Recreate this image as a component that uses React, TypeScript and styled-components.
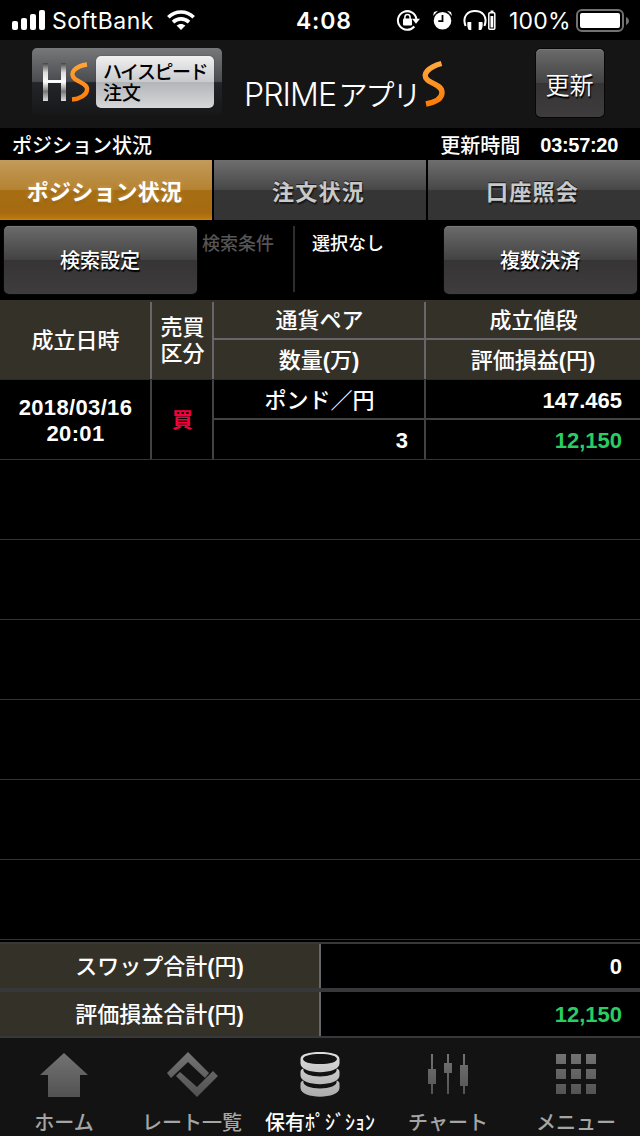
import React from "react";
import styled, { createGlobalStyle } from "styled-components";

const Global = createGlobalStyle`
  * { box-sizing: border-box; }
  body {
    margin: 0;
    background: #000;
    color: #fff;
    font-family: "Liberation Sans", "Noto Sans CJK JP", sans-serif;
    font-weight: 500;
  }
  svg { display: block; flex: none; }
`;

const Screen = styled.div`
  width: 640px;
  height: 1136px;
  display: flex;
  flex-direction: column;
  overflow: hidden;
  white-space: nowrap;
  background: #000;
`;

const StatusBar = styled.div`
  height: 40px;
  flex: none;
  display: flex;
  align-items: center;
  padding-left: 12px;
  font-family: Inter, sans-serif;
  font-size: 23px;
  font-weight: 400;
`;
const Carrier = styled.span`
  width: 102px;
  margin: 1px 13px 0 7px;
  letter-spacing: 0.5px;
`;
const Clock = styled.span`
  width: 100px;
  margin: 1px 0 0 101px;
  font-weight: 600;
  letter-spacing: 0.8px;
`;
const BatteryLevel = styled.span`
  width: 67px;
  margin: 1px 0 0 13px;
  letter-spacing: 0.2px;
`;

const Header = styled.header`
  height: 88px;
  flex: none;
  display: flex;
  align-items: flex-start;
  padding: 8px 36px 0 32px;
  background: #151515;
`;
const HighSpeedButton = styled.button`
  width: 190px;
  height: 68px;
  padding: 8px 8px 0 10px;
  display: flex;
  border: 0;
  border-radius: 5px;
  color: #000;
  background: linear-gradient(#77787a, #4b4c50 49%, #242529 51%, #17181a 96%, #151515);
`;
const HighSpeedLabel = styled.span`
  width: 118px;
  height: 52px;
  margin-left: 2px;
  padding: 4px 0 0 7px;
  border-radius: 5px;
  text-align: left;
  background: linear-gradient(#f0f0f1, #c8c9cb 50%, #b4b5b8 51%, #d6d7d9);
  box-shadow: 0 0 1px #222;
  font: 500 19px/21px "Noto Sans CJK JP", sans-serif;
`;
const TightLine = styled.span`
  display: block;
  height: 21px;
  letter-spacing: -1.5px;
`;
const Brand = styled.div`
  display: flex;
  align-items: flex-start;
  margin: 11px 0 0 22px;
  width: 203px;
  font: 300 32px/50px "Noto Sans CJK JP", sans-serif;
`;
const BrandLatin = styled.span`
  width: 96px;
  padding-top: 11px;
  font-family: Inter, sans-serif;
  font-size: 32px;
  letter-spacing: -0.9px;
`;
const BrandKana = styled.span`
  width: 82px;
  padding-top: 9px;
  font-size: 29px;
  font-weight: 350;
  letter-spacing: -2px;
  text-indent: -1px;
`;

const GlossButton = styled.button<{ $w: number; $light?: boolean }>`
  width: ${(p) => p.$w}px;
  height: 68px;
  padding: 0 1px 0 0;
  border: 0;
  border-radius: 5px;
  color: #fff;
  background: linear-gradient(#6c6b6c, #444344 49.5%, #363435 50.5%, #3e3c3d);
  box-shadow: 0 0 0 1px #070707, inset 0 1px 0 #7a7a7a;
  text-shadow: 1px 2px 1px #000;
  font: ${(p) => (p.$light ? "350 24px/67px" : "500 20px/68px")} "Noto Sans CJK JP", sans-serif;
`;
const Refresh = styled(GlossButton)`
  margin: 1px 0 0 auto;
`;

const TitleRow = styled.div`
  height: 32px;
  flex: none;
  display: flex;
  align-items: center;
  padding: 0 22px 0 12px;
  font-size: 20px;
`;
const UpdatedAt = styled.span`
  margin-left: auto;
  display: flex;
  align-items: center;
`;
const Digits = styled.span`
  font-weight: 700;
  letter-spacing: -0.3px;
  margin: 2px 0 0 20px;
`;

const Tabs = styled.nav`
  height: 60px;
  flex: none;
  display: grid;
  grid-template-columns: 212px 212px 212px;
  gap: 2px;
`;
const Tab = styled.button<{ $active?: boolean }>`
  padding: 0 3px 0 0;
  border: 0;
  color: ${(p) => (p.$active ? "#fff" : "#c9c9c9")};
  background: ${(p) =>
    p.$active
      ? "linear-gradient(#c29a5b, #b58332 49%, #a66e13 51%, #a66b10 88%, #b87610 96%, #cc820b)"
      : "linear-gradient(#6e6e6e, #484848 49%, #353535 51%, #343434)"};
  text-shadow: ${(p) => (p.$active ? "0 0 4px #dca95a, 0 2px 3px #754900" : "0 -1px 0 #222, 1px 2px 1px #181818")};
  letter-spacing: ${(p) => (p.$active ? "0.2px" : "1.3px")};
  font: 700 22px/58px "Noto Sans CJK JP", sans-serif;
`;

const SearchRow = styled.div`
  height: 80px;
  flex: none;
  display: flex;
  align-items: flex-start;
  padding: 6px 3px 0 4px;
`;
const Condition = styled.div`
  flex: 1;
  height: 66px;
  display: flex;
  font-size: 18px;
  line-height: 36px;
  padding-left: 5px;
`;
const ConditionName = styled.span`
  width: 93px;
  color: #555;
  border-right: 2px solid #2e2e30;
`;
const ConditionValue = styled.span`
  padding-left: 17px;
`;

const columns = "150px 60px 210px 214px";
const RecordGrid = styled.div<{ $head?: boolean }>`
  height: 80px;
  flex: none;
  display: grid;
  grid-template-columns: ${columns};
  column-gap: 2px;
  padding: ${(p) => (p.$head ? "2px 0 1px" : "0")};
  border-bottom: ${(p) => (p.$head ? "1px solid #2a2a2a" : "1px solid #333")};
  background: ${(p) => (p.$head ? "#343129" : "#000")};
  font-size: 22px;
`;
const Cell = styled.div<{ $head?: boolean; $first?: boolean }>`
  display: flex;
  align-items: center;
  justify-content: center;
  text-align: center;
  line-height: 26px;
  padding: ${(p) => (p.$head ? "1px 0 0 1px" : "3px 0 0 1px")};
  margin-left: ${(p) => (p.$first ? 0 : -2)}px;
  border-left: ${(p) => (p.$first ? "0" : `2px solid ${p.$head ? "#68666a" : "#424144"}`)};
`;
const Pair = styled(Cell)`
  flex-direction: column;
  align-items: stretch;
  justify-content: flex-start;
  padding: 0;
`;
const Upper = styled.div<{ $head?: boolean; $right?: boolean }>`
  height: ${(p) => (p.$head ? 38 : 40)}px;
  line-height: ${(p) => (p.$head ? 38 : 42)}px;
  border-bottom: 2px solid ${(p) => (p.$head ? "#68666a" : "#424144")};
  padding: ${(p) => (p.$right ? "0 18px 0 0" : "0 0 0 1px")};
  text-align: ${(p) => (p.$right ? "right" : "center")};
`;
const Lower = styled.div<{ $inset?: number; $gain?: boolean }>`
  height: 39px;
  line-height: 42px;
  padding-right: ${(p) => p.$inset ?? 0}px;
  text-align: ${(p) => (p.$inset ? "right" : "center")};
  color: ${(p) => (p.$gain ? "#2bcc63" : "#fff")};
`;
const Num = styled.b<{ $wide?: boolean }>`
  font-weight: 700;
  letter-spacing: ${(p) => (p.$wide ? 0.35 : 0)}px;
`;
const BuySide = styled.span`
  color: #f5003d;
  font-weight: 700;
  font-size: 21px;
  margin-top: -2px;
`;
const EmptyRow = styled.div`
  height: 80px;
  flex: none;
  border-bottom: 1px solid #333;
`;

const Totals = styled.div`
  height: 98px;
  flex: none;
  padding: 2px 0 0;
  border-bottom: 1px solid #4c4c4c;
  display: flex;
  flex-direction: column;
`;
const TotalRow = styled.div`
  height: 48px;
  display: grid;
  grid-template-columns: 319px 321px;
  border-top: 2px solid #38383a;
  border-bottom: 2px solid #38383a;
  font-size: 22px;
  line-height: 46px;
`;
const TotalName = styled.div`
  height: 44px;
  text-align: center;
  background: #343129;
`;
const TotalValue = styled.div<{ $gain?: boolean }>`
  height: 44px;
  border-left: 2px solid #68666a;
  padding-right: 18px;
  text-align: right;
  color: ${(p) => (p.$gain ? "#2bcc63" : "#fff")};
`;

const NavBar = styled.nav`
  height: 98px;
  flex: none;
  display: grid;
  grid-template-columns: repeat(5, 128px);
  background: #131313;
`;
const NavItem = styled.a<{ $active?: boolean }>`
  display: flex;
  flex-direction: column;
  align-items: center;
  padding-top: 10px;
  color: ${(p) => (p.$active ? "#fff" : "#a5a5a5")};
  font: 500 20px/32px "Noto Sans CJK JP", sans-serif;
`;
const NavLabel = styled.span`
  margin-top: 4px;
`;

const navGradient = (
  <defs>
    <linearGradient id="grey" x1="0" y1="0" x2="0" y2="54" gradientUnits="userSpaceOnUse">
      <stop offset="0.1" stopColor="#737373" />
      <stop offset="0.95" stopColor="#505050" />
    </linearGradient>
    <linearGradient id="silver" x1="0" y1="0" x2="0" y2="54" gradientUnits="userSpaceOnUse">
      <stop offset="0.1" stopColor="#dedede" />
      <stop offset="1" stopColor="#a4a4a4" />
    </linearGradient>
  </defs>
);

const HomeIcon = () => (
  <svg width="60" height="54" viewBox="0 0 60 54">
    {navGradient}
    <path fill="url(#grey)" d="M30 5 54 27H46V49H14V27H6Z" />
  </svg>
);
const RateIcon = () => (
  <svg width="60" height="54" viewBox="0 0 60 54">
    <path fill="url(#grey)" d="M26 4 47 25 43 30 26 14 9 30 5 25ZM35 49 14 28 18 24 35 39 51 23 56 28Z" />
  </svg>
);
const CoinsIcon = () => (
  <svg width="60" height="54" viewBox="0 0 60 54">
    <g fill="url(#silver)">
      <path d="M10.500 36C10.500 34 11.500 33 13.500 32.500C10 43 50 43 46.500 32.500C48.500 33 49.500 34 49.500 36V40C49.500 51.500 10.500 51.500 10.500 40Z" />
      <path d="M10.500 24C10.500 22 11.500 21 13.500 20.500C10 31 50 31 46.500 20.500C48.500 21 49.500 22 49.500 24V27.500C49.500 39 10.500 39 10.500 27.500Z" />
      <path fillRule="evenodd" d="M10.500 11C10.500 6 19 4 30 4S49.500 6 49.500 11V15.500C49.500 27 10.500 27 10.500 15.500ZM13 11C13 14 20 16 30 16S47 14 47 11 40 6 30 6 13 8 13 11Z" />
    </g>
  </svg>
);
const ChartIcon = () => (
  <svg width="60" height="54" viewBox="0 0 60 54">
    <path fill="url(#grey)" d="M13 6h2v15h3v15h-3v10h-2V36h-3V21h3ZM29 6h2v9h3v10h-3v21h-2V25h-3V15h3ZM45 6h2v11h3v21h-3v8h-2v-8h-3V17h3Z" />
  </svg>
);
const MenuIcon = () => (
  <svg width="60" height="54" viewBox="0 0 60 54">
    <path fill="url(#grey)" d="M10 6h10v10H10ZM25 6h10v10H25ZM40 6h10v10H40ZM10 21h10v10H10ZM25 21h10v10H25ZM40 21h10v10H40ZM10 36h10v10H10ZM25 36h10v10H25ZM40 36h10v10H40Z" />
  </svg>
);

const SignalIcon = () => (
  <svg width="33" height="20" viewBox="0 0 33 20" fill="#fff">
    <rect x="0" y="11" width="6" height="9" rx="2" />
    <rect x="9" y="8" width="6" height="12" rx="2" />
    <rect x="18" y="4" width="6" height="16" rx="2" />
    <rect x="27" y="0" width="6" height="20" rx="2" />
  </svg>
);
const WifiIcon = () => (
  <svg width="28" height="20" viewBox="0 0 28 20" fill="none" stroke="#fff" strokeWidth="3.600">
    <path d="M1.300 7.200C8.500.2 19.500.2 26.700 7.200" />
    <path d="M6 12.100c4.700-4.300 11.300-4.300 16 0" />
    <path d="M14 20 9.600 15.600c2.600-2.200 6.200-2.200 8.800 0Z" fill="#fff" stroke="none" />
  </svg>
);
const StatusIcons = () => (
  <svg width="100" height="24" viewBox="0 0 100 24" fill="none" stroke="#fff" strokeWidth="2">
    <path d="M18.300 18.500A9.300 9.300 0 1 1 20.400 11" />
    <path d="M16 10.800h8l-4 5Z" fill="#fff" stroke="none" />
    <rect x="7" y="10.500" width="9" height="7" rx="1" fill="#fff" stroke="none" />
    <path d="M8.900 11V9a2.600 2.600 0 0 1 5.200 0v2" strokeWidth="1.500" />
    <circle cx="46.500" cy="12.700" r="8.800" fill="#fff" stroke="none" />
    <path d="M37 8 38 4l4-1.300ZM56 8 55 4l-4-1.300Z" fill="#fff" stroke="none" />
    <path d="M46.500 7v6.200h-4.200" stroke="#000" strokeWidth="1.800" />
    <path d="M69.500 18C66 8 72 3 79 3S92 8 88.500 18" />
    <path d="M71.500 14h3.800v8h-2.500c-1.300-1.300-1.800-5-1.300-8ZM82.700 14h3.800c.5 3 0 6.700-1.300 8h-2.500Z" fill="#fff" stroke="none" />
    <rect x="92.800" y="4.800" width="6" height="16.500" rx="1" strokeWidth="1.500" />
    <path d="M94.500 2.500h3v2h-3ZM94.500 8h2.800v11.500h-2.800Z" fill="#fff" stroke="none" />
  </svg>
);
const BatteryIcon = () => (
  <svg width="53" height="24" viewBox="0 0 53 24">
    <rect x="1" y="2" width="46" height="21" rx="5" fill="none" stroke="#727272" strokeWidth="2" />
    <rect x="4" y="5" width="40" height="15" rx="2" fill="#fff" />
    <path d="M50 9c4 2 4 6 0 8Z" fill="#727272" />
  </svg>
);
const HsLogo = () => (
  <svg width="52" height="52" viewBox="0 0 52 52" fill="none">
    <defs>
      <linearGradient id="chrome" x1="0" y1="7" x2="0" y2="45" gradientUnits="userSpaceOnUse">
        <stop offset="0" stopColor="#444" />
        <stop offset="0.25" stopColor="#ddd" />
        <stop offset="0.5" stopColor="#fff" />
        <stop offset="0.75" stopColor="#777" />
        <stop offset="1" stopColor="#ddd" />
      </linearGradient>
      <linearGradient id="flame" x1="0" y1="0" x2="0" y2="50" gradientUnits="userSpaceOnUse">
        <stop offset="0" stopColor="#ffad42" />
        <stop offset="1" stopColor="#ff7600" />
      </linearGradient>
    </defs>
    <path fill="url(#chrome)" d="M1 7h5v17h13V7h5v38h-5V27H6v18H1Z" />
    <path stroke="url(#flame)" strokeWidth="4.300" d="M45 8.500C34 10 26 17 33 23C38 27 46 28 45 34C44.500 39 38 43 30 43.500" />
  </svg>
);
const BrandS = () => (
  <svg width="26" height="48" viewBox="0 0 26 48" fill="none">
    <path stroke="url(#flame)" strokeWidth="5.400" d="M20.500 4.500C8 8 0 15 6.500 21C11 25 21 26 21 33.500C21 40 13 43.500 5 45" />
  </svg>
);

const navItems = [
  { label: "ホーム", Icon: HomeIcon },
  { label: "レート一覧", Icon: RateIcon },
  { label: "保有ﾎﾟｼﾞｼｮﾝ", Icon: CoinsIcon, active: true },
  { label: "チャート", Icon: ChartIcon },
  { label: "メニュー", Icon: MenuIcon },
];

export default function App() {
  return (
    <Screen>
      <Global />
      <StatusBar>
        <SignalIcon />
        <Carrier>SoftBank</Carrier>
        <WifiIcon />
        <Clock>4:08</Clock>
        <StatusIcons />
        <BatteryLevel>100%</BatteryLevel>
        <BatteryIcon />
      </StatusBar>
      <Header>
        <HighSpeedButton>
          <HsLogo />
          <HighSpeedLabel>
            <TightLine>ハイスピード</TightLine>
            注文
          </HighSpeedLabel>
        </HighSpeedButton>
        <Brand>
          <BrandLatin>PRIME</BrandLatin>
          <BrandKana>アプリ</BrandKana>
          <BrandS />
        </Brand>
        <Refresh $w={68} $light>
          更新
        </Refresh>
      </Header>
      <TitleRow>
        <span>ポジション状況</span>
        <UpdatedAt>
          更新時間<Digits>03:57:20</Digits>
        </UpdatedAt>
      </TitleRow>
      <Tabs>
        <Tab $active>ポジション状況</Tab>
        <Tab>注文状況</Tab>
        <Tab>口座照会</Tab>
      </Tabs>
      <SearchRow>
        <GlossButton $w={193}>検索設定</GlossButton>
        <Condition>
          <ConditionName>検索条件</ConditionName>
          <ConditionValue>選択なし</ConditionValue>
        </Condition>
        <GlossButton $w={193}>複数決済</GlossButton>
      </SearchRow>
      <RecordGrid $head>
        <Cell $head $first>
          成立日時
        </Cell>
        <Cell $head>
          売買
          <br />
          区分
        </Cell>
        <Pair $head>
          <Upper $head>通貨ペア</Upper>
          <Lower>
            数量<Num>(</Num>万<Num>)</Num>
          </Lower>
        </Pair>
        <Pair $head>
          <Upper $head>成立値段</Upper>
          <Lower>
            評価損益<Num>(</Num>円<Num>)</Num>
          </Lower>
        </Pair>
      </RecordGrid>
      <RecordGrid>
        <Cell $first>
          <Num $wide>
            2018/03/16
            <br />
            20:01
          </Num>
        </Cell>
        <Cell>
          <BuySide>買</BuySide>
        </Cell>
        <Pair>
          <Upper>ポンド／円</Upper>
          <Lower $inset={16}>
            <Num>3</Num>
          </Lower>
        </Pair>
        <Pair>
          <Upper $right>
            <Num>147.465</Num>
          </Upper>
          <Lower $inset={18} $gain>
            <Num>12,150</Num>
          </Lower>
        </Pair>
      </RecordGrid>
      {[0, 1, 2, 3, 4, 5].map((i) => (
        <EmptyRow key={i} />
      ))}
      <Totals>
        <TotalRow>
          <TotalName>
            スワップ合計<Num>(</Num>円<Num>)</Num>
          </TotalName>
          <TotalValue>
            <Num>0</Num>
          </TotalValue>
        </TotalRow>
        <TotalRow>
          <TotalName>
            評価損益合計<Num>(</Num>円<Num>)</Num>
          </TotalName>
          <TotalValue $gain>
            <Num>12,150</Num>
          </TotalValue>
        </TotalRow>
      </Totals>
      <NavBar>
        {navItems.map(({ label, Icon, active }) => (
          <NavItem key={label} $active={active}>
            <Icon />
            <NavLabel>{label}</NavLabel>
          </NavItem>
        ))}
      </NavBar>
    </Screen>
  );
}
